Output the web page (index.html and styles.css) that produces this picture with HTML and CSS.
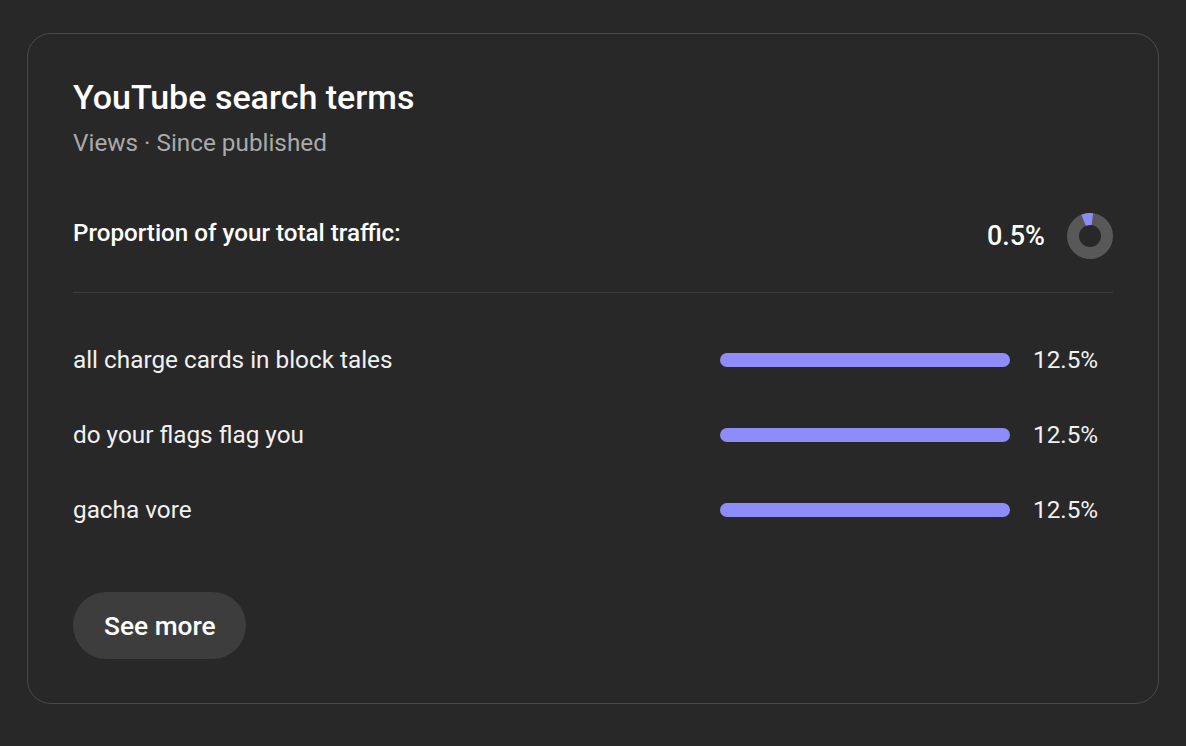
FILE: index.html
```html
<!DOCTYPE html>
<html lang="en">
<head>
  <meta charset="UTF-8" />
  <title>YouTube search terms</title>
  <link rel="stylesheet" href="styles.css">
</head>
<body>
  <div class="card">
    <h2 class="title">YouTube search terms</h2>
    <div class="subtitle">Views · Since published</div>

    <div class="share">
      <div class="share-label">Proportion of your total traffic:</div>
      <div class="share-value">
        <span class="share-pct">0.5%</span>
        <svg class="donut" width="46" height="46" viewBox="0 0 46 46">
          <circle cx="23" cy="23" r="17" fill="none" stroke="#585858" stroke-width="12" />
          <path d="M14.38 1.67 A23 23 0 0 1 26.20 0.22 L24.53 12.11 A11 11 0 0 0 18.88 12.80 Z" fill="#8e8cf8" />
        </svg>
      </div>
    </div>

    <div class="divider"></div>

    <ul class="terms">
      <li class="term">
        <span class="term-name">all charge cards in block tales</span>
        <span class="bar"><span class="bar-fill" style="width: 100%"></span></span>
        <span class="term-pct">12.5%</span>
      </li>
      <li class="term">
        <span class="term-name">do your flags flag you</span>
        <span class="bar"><span class="bar-fill" style="width: 100%"></span></span>
        <span class="term-pct">12.5%</span>
      </li>
      <li class="term">
        <span class="term-name">gacha vore</span>
        <span class="bar"><span class="bar-fill" style="width: 100%"></span></span>
        <span class="term-pct">12.5%</span>
      </li>
    </ul>

    <button class="more">See more</button>
  </div>
</body>
</html>
```

FILE: styles.css
```css
body {
  margin: 0;
  padding: 33px 27px 0;
  background-color: #282828;
  font-family: Roboto, 'Liberation Sans', sans-serif;
  color: #f1f1f1;
}
.card {
  box-sizing: border-box;
  height: 671px;
  border: 1px solid #4a4a4a;
  border-radius: 24px;
  padding: 43px 45px 44px;
}
.title {
  margin: 0;
  font-size: 34px;
  line-height: 40px;
  font-weight: 500;
  color: #ffffff;
}
.subtitle {
  margin-top: 11px;
  font-size: 24.3px;
  line-height: 30px;
  color: #aaaaaa;
}
.share {
  display: flex;
  justify-content: space-between;
  align-items: flex-start;
  margin-top: 55px;
  height: 46px;
}
.share-label {
  padding-top: 5px;
  font-size: 24.2px;
  line-height: 30px;
  font-weight: 500;
  color: #ffffff;
}
.share-value {
  display: flex;
  align-items: center;
  gap: 22px;
}
.share-pct {
  font-size: 27px;
  font-weight: 500;
  color: #ffffff;
}
.donut {
  display: block;
}
.divider {
  margin-top: 33px;
  height: 1px;
  background-color: #3d3d3d;
}
.terms {
  list-style: none;
  margin: 52px 0 0;
  padding: 0;
  display: flex;
  flex-direction: column;
  gap: 45px;
}
.term {
  display: flex;
  align-items: center;
  height: 30px;
  font-size: 24.3px;
  line-height: 30px;
}
.term-name {
  flex: 1;
}
.bar {
  width: 290px;
  height: 14px;
}
.bar-fill {
  display: block;
  height: 100%;
  border-radius: 7px;
  background-color: #8e8cf8;
}
.term-pct {
  width: 80px;
  margin-left: 23px;
}
.more {
  margin-top: 67px;
  height: 67px;
  padding: 0 30px 0 31px;
  border: none;
  border-radius: 34px;
  background-color: #3d3d3d;
  color: #ffffff;
  font-family: Roboto, 'Liberation Sans', sans-serif;
  font-size: 26.3px;
  font-weight: 500;
  cursor: pointer;
}
```
